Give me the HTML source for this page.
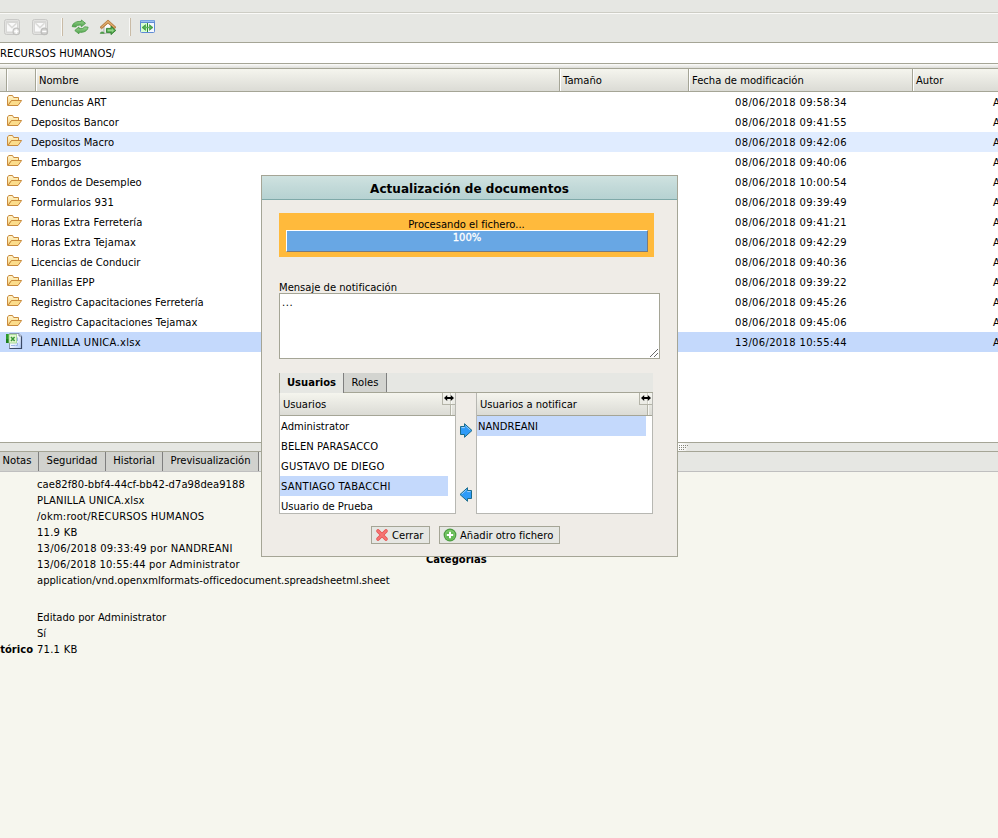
<!DOCTYPE html>
<html lang="es">
<head>
<meta charset="utf-8">
<title>OpenKM</title>
<style>
html,body{margin:0;padding:0}
body{width:998px;height:838px;overflow:hidden;position:relative;background:#E6E7E3;
 font-family:"DejaVu Sans","Liberation Sans",sans-serif;font-size:10px;color:#000}
.abs{position:absolute}
.hl{position:absolute;left:0;width:998px;height:1px}
.t{position:absolute;white-space:nowrap;line-height:20px;height:20px;margin-top:1px}
.hdr{background:linear-gradient(#F5F5EE,#DBDBD5)}
.sep{position:absolute;top:69px;height:22px;width:1px;background:#A5A596}
.sep:after{content:"";position:absolute;left:1px;top:0;width:1px;height:22px;background:#fff}
.row{position:absolute;left:0;width:998px;height:20px}
.row .n{position:absolute;left:31px;top:1px;line-height:20px;white-space:nowrap}
.row .d{position:absolute;left:735px;top:1px;line-height:20px;white-space:nowrap;letter-spacing:.33px}
.row .a{position:absolute;left:993px;top:1px;line-height:20px;white-space:nowrap}
.row svg{position:absolute;left:6px;top:2px}
.tab{position:absolute;top:452px;height:19px;background:#D1D2CE;border-right:1px solid #7F7F7F;line-height:17px;text-align:center}
.p{position:absolute;left:37px;white-space:nowrap;line-height:16px;height:16px;margin-top:1px}
.dlg{position:absolute;left:261px;top:175px;width:415px;height:380px;border:1px solid #A5A596;background:#EFECE7}
.dlg .abs, .dlg .t{position:absolute}
.li{position:absolute;left:0;height:19px;line-height:20px;white-space:nowrap;padding-left:1px;padding-top:1px}
.btn{position:absolute;top:350px;height:16px;border:1px solid #A5A596;background:#E6E7E3;line-height:16px;white-space:nowrap}
.btn span{margin-top:1px}
</style>
</head>
<body>

<!-- top strip + toolbar -->
<div class="hl" style="top:12px;background:#CDCDC5"></div>
<div class="hl" style="top:13px;background:#FAFAF8"></div>
<svg class="abs" style="left:0;top:14px" width="170" height="28" viewBox="0 14 170 28">
 <defs>
  <linearGradient id="gr" x1="0" y1="0" x2="0" y2="1"><stop offset="0" stop-color="#9AD690"/><stop offset="1" stop-color="#4FA14B"/></linearGradient>
  <linearGradient id="rf" x1="0" y1="0" x2="0" y2="1"><stop offset="0" stop-color="#D9A05A"/><stop offset="1" stop-color="#B97A3A"/></linearGradient>
  <linearGradient id="bl" x1="0" y1="0" x2="0" y2="1"><stop offset="0" stop-color="#7FAAE6"/><stop offset="1" stop-color="#5B87D0"/></linearGradient>
 </defs>
 <!-- disabled mail + -->
 <g>
  <rect x="4.5" y="19.5" width="15" height="15" rx="2" fill="#E2E2E0" stroke="#C9C9C7"/>
  <rect x="6" y="21" width="12" height="12" fill="#D8D8D6"/>
  <rect x="7" y="23" width="10" height="8.5" fill="#FAFAFA"/>
  <path d="M7.5 23.2L12 27.6L16.5 23.2" fill="none" stroke="#DCDCDA" stroke-width="1.6"/>
  <circle cx="16.3" cy="31.4" r="3.2" fill="#E4E4E2" stroke="#C2C2C0" stroke-width="1.3"/>
  <path d="M14.3 31.4H18.3M16.3 29.4V33.4" stroke="#FFFFFF" stroke-width="1.4"/>
 </g>
 <!-- disabled mail - -->
 <g transform="translate(28 0)">
  <rect x="4.5" y="19.5" width="15" height="15" rx="2" fill="#E2E2E0" stroke="#C9C9C7"/>
  <rect x="6" y="21" width="12" height="12" fill="#D8D8D6"/>
  <rect x="7" y="23" width="10" height="8.5" fill="#FAFAFA"/>
  <path d="M7.5 23.2L12 27.6L16.5 23.2" fill="none" stroke="#DCDCDA" stroke-width="1.6"/>
  <circle cx="16.3" cy="31.4" r="3.2" fill="#CFCFCD" stroke="#BEBEBC" stroke-width="1.3"/>
  <path d="M14.2 31.4H18.4" stroke="#FFFFFF" stroke-width="1.5"/>
 </g>
 <!-- separators -->
 <rect x="61" y="18" width="1" height="18" fill="#F8F8F6"/><rect x="62" y="18" width="1" height="18" fill="#C9BBA6"/>
 <rect x="129" y="18" width="1" height="18" fill="#F8F8F6"/><rect x="130" y="18" width="1" height="18" fill="#C9BBA6"/>
 <!-- refresh -->
 <path d="M72.2 26.6C73 22.4 76.8 21.2 81.4 21.5V20L85.5 23.3L81.4 26.8V25.2C78 24.9 76.6 25.4 75.8 27Z" fill="url(#gr)" stroke="#4C9A47" stroke-width=".9" stroke-linejoin="round"/>
 <path d="M88.1 27.2C87.3 31.4 83.5 32.6 78.9 32.3V33.8L74.8 30.5L78.9 27V28.6C82.3 28.9 83.7 28.4 84.5 26.8Z" fill="url(#gr)" stroke="#4C9A47" stroke-width=".9" stroke-linejoin="round"/>
 <!-- home -->
 <path d="M104 26V33.2H112V26L108 22.4Z" fill="#FBFBFB" stroke="#9A9A9A" stroke-width=".8"/>
 <path d="M100 27.3L108 20L116 27.3L114.4 28.8L108 23.2L101.6 28.8Z" fill="url(#rf)" stroke="#B5793B" stroke-width=".8" stroke-linejoin="round"/><path d="M101.4 27.4L108 21.6L114.6 27.4" fill="none" stroke="#E6BE86" stroke-width=".8"/>
 <path d="M100.2 33.4C100.4 31.6 103.6 31.2 104.2 33.4Z" fill="#4FA14B" stroke="#3E8C3B" stroke-width=".6"/>
 <path d="M106.4 28.4H111V26.2L115.8 30.4L111 34.6V32.4H106.4Z" fill="#55A84F" stroke="#2F7F2E" stroke-width=".9" stroke-linejoin="round"/><path d="M107.6 29.6H112V28.6L114 30.4L112 32.2V31.2H107.6Z" fill="#93D487"/>
 <!-- split -->
 <rect x="140.5" y="20.5" width="14" height="12" rx="1" fill="#FFFFFF" stroke="#5F8BD4"/>
 <rect x="140" y="20" width="15" height="3" rx="1" fill="url(#bl)"/>
 <rect x="141" y="21" width="13" height="1" fill="#9CC0F0"/>
 <rect x="141" y="23" width="6" height="9" fill="#D9FFD2"/>
 <rect x="148" y="23" width="6" height="9" fill="#F4F8FF"/>
 <rect x="147" y="23" width="1" height="9" fill="#2E8B2E"/>
 <path d="M142 27.5L145.6 24.6V30.4Z M153 27.5L149.4 24.6V30.4Z" fill="#46A346" stroke="#3C963C" stroke-width=".6"/>
 <rect x="144" y="26.8" width="7" height="1.4" fill="#5DB65D"/>
</svg>

<div class="hl" style="top:42px;background:#A5A596"></div>

<!-- path bar -->
<div class="abs" style="left:0;top:43px;width:998px;height:20px;background:#fff"></div>
<div class="t" style="left:0;top:43px;line-height:20px;letter-spacing:.1px">RECURSOS HUMANOS/</div>
<div class="hl" style="top:63px;background:#A5A596"></div>
<div class="abs" style="left:0;top:64px;width:998px;height:4px;background:linear-gradient(#FCFCFA,#DDDDD9)"></div>
<div class="hl" style="top:68px;background:#A5A596"></div>

<!-- list header -->
<div class="abs hdr" style="left:0;top:69px;width:998px;height:22px"></div>
<div class="sep" style="left:6px"></div>
<div class="sep" style="left:35px"></div>
<div class="sep" style="left:559px"></div>
<div class="sep" style="left:688px"></div>
<div class="sep" style="left:912px"></div>
<div class="t" style="left:39px;top:70px">Nombre</div>
<div class="t" style="left:563px;top:70px">Tamaño</div>
<div class="t" style="left:692px;top:70px">Fecha de modificación</div>
<div class="t" style="left:916px;top:70px">Autor</div>
<div class="hl" style="top:91px;background:#A5A596"></div>

<!-- list body -->
<div class="abs" style="left:0;top:92px;width:998px;height:350px;background:#fff"></div>
<div class="row" style="top:92px"><svg style="left:6px;top:2px" width="17" height="14" viewBox="0 0 17 14"><defs><linearGradient id="fg" x1="0" y1="0" x2="0" y2="1"><stop offset="0" stop-color="#FFF6D2"/><stop offset="1" stop-color="#F9D273"/></linearGradient></defs><path d="M1.5 11.2V2.8L3 1.5H6.6L7.6 3.5H12.5V6.5H5.5L2 11.5Z" fill="url(#fg)" stroke="#C98B3D" stroke-width="1" stroke-linejoin="round"/><path d="M2 11.5L5.5 6.5H15.6L12 11.5Z" fill="#FBDD8C" stroke="#C98B3D" stroke-width="1" stroke-linejoin="round"/></svg><span class="n" style="letter-spacing:0.04px">Denuncias ART</span><span class="d">08/06/2018 09:58:34</span><span class="a">Administrator</span></div>
<div class="row" style="top:112px"><svg style="left:6px;top:2px" width="17" height="14" viewBox="0 0 17 14"><path d="M1.5 11.2V2.8L3 1.5H6.6L7.6 3.5H12.5V6.5H5.5L2 11.5Z" fill="url(#fg)" stroke="#C98B3D" stroke-width="1" stroke-linejoin="round"/><path d="M2 11.5L5.5 6.5H15.6L12 11.5Z" fill="#FBDD8C" stroke="#C98B3D" stroke-width="1" stroke-linejoin="round"/></svg><span class="n">Depositos Bancor</span><span class="d">08/06/2018 09:41:55</span><span class="a">Administrator</span></div>
<div class="row" style="top:132px;background:#E0ECFF"><svg style="left:6px;top:2px" width="17" height="14" viewBox="0 0 17 14"><path d="M1.5 11.2V2.8L3 1.5H6.6L7.6 3.5H12.5V6.5H5.5L2 11.5Z" fill="url(#fg)" stroke="#C98B3D" stroke-width="1" stroke-linejoin="round"/><path d="M2 11.5L5.5 6.5H15.6L12 11.5Z" fill="#FBDD8C" stroke="#C98B3D" stroke-width="1" stroke-linejoin="round"/></svg><span class="n">Depositos Macro</span><span class="d">08/06/2018 09:42:06</span><span class="a">Administrator</span></div>
<div class="row" style="top:152px"><svg style="left:6px;top:2px" width="17" height="14" viewBox="0 0 17 14"><path d="M1.5 11.2V2.8L3 1.5H6.6L7.6 3.5H12.5V6.5H5.5L2 11.5Z" fill="url(#fg)" stroke="#C98B3D" stroke-width="1" stroke-linejoin="round"/><path d="M2 11.5L5.5 6.5H15.6L12 11.5Z" fill="#FBDD8C" stroke="#C98B3D" stroke-width="1" stroke-linejoin="round"/></svg><span class="n">Embargos</span><span class="d">08/06/2018 09:40:06</span><span class="a">Administrator</span></div>
<div class="row" style="top:172px"><svg style="left:6px;top:2px" width="17" height="14" viewBox="0 0 17 14"><path d="M1.5 11.2V2.8L3 1.5H6.6L7.6 3.5H12.5V6.5H5.5L2 11.5Z" fill="url(#fg)" stroke="#C98B3D" stroke-width="1" stroke-linejoin="round"/><path d="M2 11.5L5.5 6.5H15.6L12 11.5Z" fill="#FBDD8C" stroke="#C98B3D" stroke-width="1" stroke-linejoin="round"/></svg><span class="n">Fondos de Desempleo</span><span class="d">08/06/2018 10:00:54</span><span class="a">Administrator</span></div>
<div class="row" style="top:192px"><svg style="left:6px;top:2px" width="17" height="14" viewBox="0 0 17 14"><path d="M1.5 11.2V2.8L3 1.5H6.6L7.6 3.5H12.5V6.5H5.5L2 11.5Z" fill="url(#fg)" stroke="#C98B3D" stroke-width="1" stroke-linejoin="round"/><path d="M2 11.5L5.5 6.5H15.6L12 11.5Z" fill="#FBDD8C" stroke="#C98B3D" stroke-width="1" stroke-linejoin="round"/></svg><span class="n" style="letter-spacing:0.13px">Formularios 931</span><span class="d">08/06/2018 09:39:49</span><span class="a">Administrator</span></div>
<div class="row" style="top:212px"><svg style="left:6px;top:2px" width="17" height="14" viewBox="0 0 17 14"><path d="M1.5 11.2V2.8L3 1.5H6.6L7.6 3.5H12.5V6.5H5.5L2 11.5Z" fill="url(#fg)" stroke="#C98B3D" stroke-width="1" stroke-linejoin="round"/><path d="M2 11.5L5.5 6.5H15.6L12 11.5Z" fill="#FBDD8C" stroke="#C98B3D" stroke-width="1" stroke-linejoin="round"/></svg><span class="n" style="letter-spacing:0.05px">Horas Extra Ferretería</span><span class="d">08/06/2018 09:41:21</span><span class="a">Administrator</span></div>
<div class="row" style="top:232px"><svg style="left:6px;top:2px" width="17" height="14" viewBox="0 0 17 14"><path d="M1.5 11.2V2.8L3 1.5H6.6L7.6 3.5H12.5V6.5H5.5L2 11.5Z" fill="url(#fg)" stroke="#C98B3D" stroke-width="1" stroke-linejoin="round"/><path d="M2 11.5L5.5 6.5H15.6L12 11.5Z" fill="#FBDD8C" stroke="#C98B3D" stroke-width="1" stroke-linejoin="round"/></svg><span class="n" style="letter-spacing:0.1px">Horas Extra Tejamax</span><span class="d">08/06/2018 09:42:29</span><span class="a">Administrator</span></div>
<div class="row" style="top:252px"><svg style="left:6px;top:2px" width="17" height="14" viewBox="0 0 17 14"><path d="M1.5 11.2V2.8L3 1.5H6.6L7.6 3.5H12.5V6.5H5.5L2 11.5Z" fill="url(#fg)" stroke="#C98B3D" stroke-width="1" stroke-linejoin="round"/><path d="M2 11.5L5.5 6.5H15.6L12 11.5Z" fill="#FBDD8C" stroke="#C98B3D" stroke-width="1" stroke-linejoin="round"/></svg><span class="n">Licencias de Conducir</span><span class="d">08/06/2018 09:40:36</span><span class="a">Administrator</span></div>
<div class="row" style="top:272px"><svg style="left:6px;top:2px" width="17" height="14" viewBox="0 0 17 14"><path d="M1.5 11.2V2.8L3 1.5H6.6L7.6 3.5H12.5V6.5H5.5L2 11.5Z" fill="url(#fg)" stroke="#C98B3D" stroke-width="1" stroke-linejoin="round"/><path d="M2 11.5L5.5 6.5H15.6L12 11.5Z" fill="#FBDD8C" stroke="#C98B3D" stroke-width="1" stroke-linejoin="round"/></svg><span class="n" style="letter-spacing:0.08px">Planillas EPP</span><span class="d">08/06/2018 09:39:22</span><span class="a">Administrator</span></div>
<div class="row" style="top:292px"><svg style="left:6px;top:2px" width="17" height="14" viewBox="0 0 17 14"><path d="M1.5 11.2V2.8L3 1.5H6.6L7.6 3.5H12.5V6.5H5.5L2 11.5Z" fill="url(#fg)" stroke="#C98B3D" stroke-width="1" stroke-linejoin="round"/><path d="M2 11.5L5.5 6.5H15.6L12 11.5Z" fill="#FBDD8C" stroke="#C98B3D" stroke-width="1" stroke-linejoin="round"/></svg><span class="n" style="letter-spacing:0.03px">Registro Capacitaciones Ferretería</span><span class="d">08/06/2018 09:45:26</span><span class="a">Administrator</span></div>
<div class="row" style="top:312px"><svg style="left:6px;top:2px" width="17" height="14" viewBox="0 0 17 14"><path d="M1.5 11.2V2.8L3 1.5H6.6L7.6 3.5H12.5V6.5H5.5L2 11.5Z" fill="url(#fg)" stroke="#C98B3D" stroke-width="1" stroke-linejoin="round"/><path d="M2 11.5L5.5 6.5H15.6L12 11.5Z" fill="#FBDD8C" stroke="#C98B3D" stroke-width="1" stroke-linejoin="round"/></svg><span class="n" style="letter-spacing:0.06px">Registro Capacitaciones Tejamax</span><span class="d">08/06/2018 09:45:06</span><span class="a">Administrator</span></div>
<div class="row" style="top:332px;background:#C4D9FC"><svg style="left:6px;top:0px" width="17" height="18" viewBox="0 0 17 18"><defs><linearGradient id="xg" x1="0" y1="0" x2="1" y2="1"><stop offset="0" stop-color="#FFFFFF"/><stop offset=".5" stop-color="#F0F5FF"/><stop offset="1" stop-color="#A9C6F6"/></linearGradient></defs><path d="M3.5 1.5H13L15.5 4V16.5H3.5Z" fill="url(#xg)" stroke="#8A97AD" stroke-width="1"/><path d="M15.5 4.5V16.5H3.5" fill="none" stroke="#3B4A66" stroke-width="1.2"/><path d="M13 1.5V4H15.5" fill="#E8EEFA" stroke="#5A6A88" stroke-width=".8"/><path d="M5 13.5H9M11.5 11V13.5H9.5M11.5 5.5V9" stroke="#9DB7E6" stroke-width="1" fill="none"/><rect x="0" y="2" width="4" height="9" fill="#2E9A2E"/><rect x="0" y="7" width="4" height="4" fill="#1F7F1F"/><rect x="3" y="2.5" width="7.5" height="8.5" fill="#E3F8CF" stroke="#9BD088" stroke-width=".8"/><path d="M5 5L8.6 9M8.6 5L5 9" stroke="#3A963A" stroke-width="1.5"/></svg><span class="n" style="letter-spacing:0.26px">PLANILLA UNICA.xlsx</span><span class="d">13/06/2018 10:55:44</span><span class="a">Administrator</span></div>
<div class="hl" style="top:442px;background:#A5A596"></div>

<!-- splitter + bottom tabs -->
<div class="hl" style="top:451px;background:#A5A596"></div>
<div class="abs" style="left:0;top:452px;width:998px;height:19px;background:#E6E7E3"></div>
<div class="hl" style="top:471px;background:#BFBFBF"></div>
<div class="abs" style="left:0;top:472px;width:998px;height:366px;background:#F6F6EE"></div>

<!-- bottom tabs -->
<div class="tab" style="left:-4px;width:42px">Notas</div>
<div class="tab" style="left:39px;width:66px">Seguridad</div>
<div class="tab" style="left:106px;width:56px">Historial</div>
<div class="tab" style="left:163px;width:95px">Previsualización</div>
<!-- splitter handle -->
<svg class="abs" style="left:678px;top:443px" width="14" height="8" viewBox="0 0 14 8"><defs><linearGradient id="hg" x1="0" y1="0" x2="1" y2="0"><stop offset="0" stop-color="#FFFFFF"/><stop offset=".55" stop-color="#F4F4F2"/><stop offset="1" stop-color="#E6E7E3"/></linearGradient></defs><path d="M0 0H12L8 8H0Z" fill="url(#hg)"/><g fill="#85857A"><rect x="1" y="2" width="1" height="1"/><rect x="3" y="2" width="1" height="1"/><rect x="5" y="2" width="1" height="1"/><rect x="7" y="2" width="1" height="1"/><rect x="9" y="2" width="1" height="1"/><rect x="1" y="4" width="1" height="1"/><rect x="3" y="4" width="1" height="1"/><rect x="5" y="4" width="1" height="1"/><rect x="7" y="4" width="1" height="1"/><rect x="1" y="6" width="1" height="1"/><rect x="3" y="6" width="1" height="1"/><rect x="5" y="6" width="1" height="1"/></g></svg>
<!-- properties -->
<div class="p" style="top:476px;letter-spacing:.05px">cae82f80-bbf4-44cf-bb42-d7a98dea9188</div>
<div class="p" style="top:492px;letter-spacing:.14px">PLANILLA UNICA.xlsx</div>
<div class="p" style="top:508px;letter-spacing:.2px">/okm:root/RECURSOS HUMANOS</div>
<div class="p" style="top:524px;letter-spacing:.24px">11.9 KB</div>
<div class="p" style="top:540px;letter-spacing:.21px">13/06/2018 09:33:49 por NANDREANI</div>
<div class="p" style="top:556px;letter-spacing:.16px">13/06/2018 10:55:44 por Administrator</div>
<div class="p" style="top:572px">application/vnd.openxmlformats-officedocument.spreadsheetml.sheet</div>
<div class="p" style="top:609px">Editado por Administrator</div>
<div class="p" style="top:625px">Sí</div>
<div class="p" style="top:641px;letter-spacing:.24px">71.1 KB</div>
<div class="p" style="top:641px;left:auto;right:965px;font-weight:bold">Tamaño del histórico</div>
<div class="p" style="top:551px;left:426px;font-weight:bold">Categorías</div>

<!-- dialog -->
<div class="dlg">
 <div class="abs" style="left:0;top:0;width:415px;height:23px;background:linear-gradient(#CFE2E0,#C3DAD9 45%,#B6D2D2)"></div>
 <div class="abs" style="left:0;top:23px;width:415px;height:1px;background:#7FA9A9"></div>
 <div class="abs" style="left:0;top:2px;width:415px;height:23px;line-height:23px;text-align:center;font-weight:bold;font-size:12px;letter-spacing:.03px">Actualización de documentos</div>

 <!-- progress -->
 <div class="abs" style="left:17px;top:37px;width:375px;height:44px;background:#FFBA3C"></div>
 <div class="abs" style="left:17px;top:41px;width:375px;height:16px;line-height:16px;text-align:center">Procesando el fichero...</div>
 <div class="abs" style="left:24px;top:54px;width:360px;height:20px;background:#68A7E4;border-top:1px solid #fff;border-left:1px solid #fff;border-right:1px solid #7B7B7B;border-bottom:1px solid #7B7B7B"></div>
 <div class="abs" style="left:24px;top:55px;width:362px;height:14px;line-height:14px;text-align:center;color:#fff;-webkit-text-stroke:.3px #fff">100%</div>

 <!-- message -->
 <div class="abs" style="left:17px;top:104px;line-height:16px;white-space:nowrap">Mensaje de notificación</div>
 <div class="abs" style="left:17px;top:117px;width:379px;height:64px;border:1px solid #A5A596;background:#fff"></div>
 <div class="abs" style="left:20px;top:119px;line-height:16px;letter-spacing:.6px">...</div>
 <svg class="abs" style="left:386px;top:171px" width="10" height="10" viewBox="0 0 10 10"><path d="M2 10L10 2M6 10L10 6" stroke="#6A6A6A" stroke-width="1"/></svg>

 <!-- tabs -->
 <div class="abs" style="left:17px;top:197px;width:374px;height:20px;background:#E6E7E3"></div>
 <div class="abs" style="left:17px;top:197px;width:1px;height:20px;background:#A5A596"></div>
 <div class="abs" style="left:18px;top:197px;width:63px;height:20px;background:#E6E7E3;line-height:19px;text-align:center;font-weight:bold">Usuarios</div>
 <div class="abs" style="left:81px;top:197px;width:1px;height:20px;background:#7F7F7F"></div>
 <div class="abs" style="left:82px;top:197px;width:42px;height:19px;background:#D3D4D0;line-height:19px;text-align:center">Roles</div>
 <div class="abs" style="left:124px;top:197px;width:1px;height:20px;background:#7F7F7F"></div>
 <div class="abs" style="left:82px;top:216px;width:309px;height:1px;background:#A5A596"></div>

 <!-- left list -->
 <div class="abs" style="left:17px;top:217px;width:175px;height:120px;border:1px solid #B7B7B2;border-top:0;background:#fff;overflow:hidden">
  <div class="abs hdr" style="left:0;top:0;width:175px;height:22px"></div>
  <div class="abs" style="left:0;top:22px;width:175px;height:1px;background:#A5A596"></div>
  <div class="abs" style="left:3px;top:2px;line-height:20px">Usuarios</div>
  <div class="abs" style="left:170px;top:12px;width:1px;height:10px;background:#B4B4A8"></div>
  <div class="abs" style="left:171px;top:12px;width:1px;height:10px;background:#F6F6F2"></div>
  <div class="abs" style="left:162px;top:0;width:13px;height:11px;border-left:1px solid #B4B4A8;border-bottom:1px solid #B4B4A8;background:linear-gradient(#F4F4EE,#EBEBE5)"></div><div class="abs" style="left:170px;top:0;width:1px;height:11px;background:#D2D2C8"></div><div class="abs" style="left:171px;top:0;width:1px;height:11px;background:#FAFAF7"></div>
  <svg class="abs" style="left:164px;top:2px" width="10" height="6" viewBox="0 0 10 6"><path d="M0 3L3.2 0V6ZM10 3L6.8 0V6Z" fill="#000"/><rect x="2" y="2" width="6" height="2" fill="#000"/></svg>
  <div class="li" style="top:23px;width:167px">Administrator</div>
  <div class="li" style="top:43px;width:167px;letter-spacing:.06px">BELEN PARASACCO</div>
  <div class="li" style="top:63px;width:167px;letter-spacing:.19px">GUSTAVO DE DIEGO</div>
  <div class="li" style="top:83px;width:167px;background:#C4D9FC;letter-spacing:.24px">SANTIAGO TABACCHI</div>
  <div class="li" style="top:103px;width:167px">Usuario de Prueba</div>
 </div>

 <!-- arrows -->
 <svg class="abs" style="left:197px;top:246px" width="14" height="17" viewBox="0 0 14 17"><path d="M1.5 4.5H5.5V1.7L13 8.5L5.5 15.3V12.5H1.5Z" fill="#2E9BF8" stroke="#1B6C8C" stroke-width="1" stroke-linejoin="miter"/><path d="M2.5 5.6H5.8" stroke="#A8D4FA" stroke-width="1"/><path d="M6.6 3.9L11.2 8.1" stroke="#A8D4FA" stroke-width=".8"/></svg>
 <svg class="abs" style="left:197px;top:310px" width="14" height="17" viewBox="0 0 14 17"><path d="M12.5 4.5H8.5V1.7L1 8.5L8.5 15.3V12.5H12.5Z" fill="#2E9BF8" stroke="#1B6C8C" stroke-width="1" stroke-linejoin="miter"/><path d="M11.5 5.6H8.2" stroke="#A8D4FA" stroke-width="1"/><path d="M7.4 3.9L2.8 8.1" stroke="#A8D4FA" stroke-width=".8"/></svg>

 <!-- right list -->
 <div class="abs" style="left:214px;top:217px;width:175px;height:120px;border:1px solid #B7B7B2;border-top:0;background:#fff;overflow:hidden">
  <div class="abs hdr" style="left:0;top:0;width:175px;height:22px"></div>
  <div class="abs" style="left:0;top:22px;width:175px;height:1px;background:#A5A596"></div>
  <div class="abs" style="left:3px;top:2px;line-height:20px">Usuarios a notificar</div>
  <div class="abs" style="left:170px;top:12px;width:1px;height:10px;background:#B4B4A8"></div>
  <div class="abs" style="left:171px;top:12px;width:1px;height:10px;background:#F6F6F2"></div>
  <div class="abs" style="left:162px;top:0;width:13px;height:11px;border-left:1px solid #B4B4A8;border-bottom:1px solid #B4B4A8;background:linear-gradient(#F4F4EE,#EBEBE5)"></div><div class="abs" style="left:170px;top:0;width:1px;height:11px;background:#D2D2C8"></div><div class="abs" style="left:171px;top:0;width:1px;height:11px;background:#FAFAF7"></div>
  <svg class="abs" style="left:164px;top:2px" width="10" height="6" viewBox="0 0 10 6"><path d="M0 3L3.2 0V6ZM10 3L6.8 0V6Z" fill="#000"/><rect x="2" y="2" width="6" height="2" fill="#000"/></svg>
  <div class="li" style="top:23px;width:168px;background:#C4D9FC">NANDREANI</div>
 </div>

 <!-- buttons -->
 <div class="btn" style="left:109px;width:57px"><svg class="abs" style="left:3px;top:1px" width="14" height="14" viewBox="0 0 14 14"><path d="M3 3L11 11M11 3L3 11" stroke="#E5504E" stroke-width="3.6" stroke-linecap="round"/><path d="M3 3L11 11M11 3L3 11" stroke="#F67574" stroke-width="2" stroke-linecap="round"/></svg><span style="position:absolute;left:20px;top:0">Cerrar</span></div>
 <div class="btn" style="left:177px;width:119px"><svg class="abs" style="left:3px;top:1px" width="14" height="14" viewBox="0 0 14 14"><circle cx="7" cy="7" r="6.4" fill="#4C9C41"/><circle cx="7" cy="7" r="5.2" fill="#7CCB6B"/><circle cx="7" cy="7.6" r="4.4" fill="#63BA54"/><path d="M3.8 7H10.2M7 3.8V10.2" stroke="#fff" stroke-width="2"/></svg><span style="position:absolute;left:20px;top:0">Añadir otro fichero</span></div>
</div>

</body>
</html>
